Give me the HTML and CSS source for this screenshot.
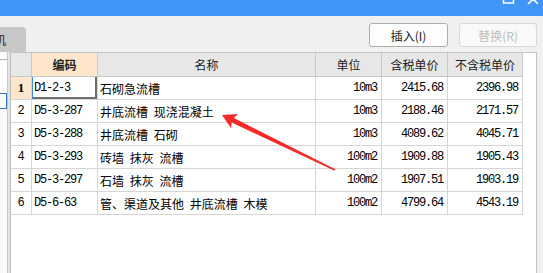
FILE: index.html
```html
<!DOCTYPE html>
<html>
<head>
    <meta charset="utf-8">
    <link rel="stylesheet" href="styles.css">
</head>
<body>
<div class="titlebar">
    <svg class="winbtns" width="40" height="16" viewBox="0 0 40 16">
        <rect x="5.5" y="-8" width="10" height="11" fill="none" stroke="#fff" stroke-width="1.5"/>
        <path d="M30 -6 L40 4 M40 -6 L30 4" stroke="#fff" stroke-width="1.6"/>
    </svg>
</div>
<div class="toolbar">
    <div class="tab"><span>机</span></div>
    <div class="actions">
        <button class="btn">插入(I)</button>
        <button class="btn disabled">替换(R)</button>
    </div>
</div>
<div class="main">
    <div class="sidepanel">
        <div class="box"></div>
        <div class="box focus"></div>
    </div>
    <div class="splitter"></div>
    <div class="grid">
        <table>
            <thead>
            <tr>
                <th class="c-no"></th>
                <th class="c-code current"><b>编码</b></th>
                <th class="c-name">名称</th>
                <th class="c-unit">单位</th>
                <th class="c-tax">含税单价</th>
                <th class="c-notax">不含税单价</th>
            </tr>
            </thead>
            <tbody>
            <tr>
                <td class="no current"><b>1</b></td>
                <td class="mono selected">D1-2-3</td>
                <td class="cn">石砌急流槽</td>
                <td class="mono right">10m3</td>
                <td class="mono right">2415.68</td>
                <td class="mono right">2396.98</td>
            </tr>
            <tr>
                <td class="no">2</td>
                <td class="mono">D5-3-287</td>
                <td class="cn">井底流槽 现浇混凝土</td>
                <td class="mono right">10m3</td>
                <td class="mono right">2188.46</td>
                <td class="mono right">2171.57</td>
            </tr>
            <tr>
                <td class="no">3</td>
                <td class="mono">D5-3-288</td>
                <td class="cn">井底流槽 石砌</td>
                <td class="mono right">10m3</td>
                <td class="mono right">4089.62</td>
                <td class="mono right">4045.71</td>
            </tr>
            <tr>
                <td class="no">4</td>
                <td class="mono">D5-3-293</td>
                <td class="cn">砖墙 抹灰 流槽</td>
                <td class="mono right">100m2</td>
                <td class="mono right">1909.88</td>
                <td class="mono right">1905.43</td>
            </tr>
            <tr>
                <td class="no">5</td>
                <td class="mono">D5-3-297</td>
                <td class="cn">石墙 抹灰 流槽</td>
                <td class="mono right">100m2</td>
                <td class="mono right">1907.51</td>
                <td class="mono right">1903.19</td>
            </tr>
            <tr>
                <td class="no">6</td>
                <td class="mono">D5-6-63</td>
                <td class="cn">管、渠道及其他 井底流槽 木模</td>
                <td class="mono right">100m2</td>
                <td class="mono right">4799.64</td>
                <td class="mono right">4543.19</td>
            </tr>
            </tbody>
        </table>
    </div>
    <div class="edge"></div>
</div>
<svg class="arrow" width="543" height="273" viewBox="0 0 543 273">
    <polygon fill="#f42b2b" points="222,115 238.1,113.9 233.9,118.1 335.3,169.3 334.6,170.7 231.7,122.5 231.1,128.3"/>
</svg>
</body>
</html>
```

FILE: styles.css
```css
html,body{margin:0;padding:0}
body{width:543px;height:273px;overflow:hidden;background:#f0f0f0;font-family:"Noto Sans CJK SC","Liberation Sans",sans-serif;font-size:12px;color:#000;position:relative}

.titlebar{height:16px;background:#3f96f6;display:flex;justify-content:flex-end;overflow:hidden}
.winbtns{margin-right:5px;display:block}

.toolbar{height:36px;display:flex;align-items:flex-end}
.tab{width:26px;height:25px;background:#c7c7c7;border-top-right-radius:4px;overflow:hidden;display:flex;align-items:center;color:#222}
.tab span{margin-left:-6px;margin-top:-1px}
.actions{margin-left:auto;margin-right:6px;align-self:flex-start;margin-top:7px;display:flex;gap:11px}
.btn{width:79px;height:24px;padding:0;background:#fdfdfd;border:1px solid #adadad;border-radius:3px;font-family:"Noto Sans CJK SC",sans-serif;font-size:12px;color:#222}
.btn.disabled{width:78px;border-color:#d9d9d9;color:#bdbdbd;background:#f9f9f9}

.main{height:221px;display:flex}
.sidepanel{width:7px;border-right:1px solid #c8c8c8;background:#fbfbfb;padding-top:7px;box-sizing:content-box}
.sidepanel .box{height:27px;border-top:1px solid #b4b4b4;background:#fff}
.sidepanel .box.focus{height:14px;margin-top:6px;border:1px solid #2f6fc4;border-left:none}
.splitter{width:2px;background:#e4e4e4}
.grid{width:525px;background:#fff;border-left:1px solid #bcbcbc;border-top:1px solid #c4c4c4;border-right:1px solid #c4c4c4}
.edge{flex:1;background:#f0f0f0}

table{border-collapse:separate;border-spacing:0;table-layout:fixed;width:512px}
th,td{box-sizing:border-box;padding:0;white-space:nowrap;overflow:hidden}
th{height:24px;background:#e7e7e7;border-right:1px solid #c9c9c9;border-bottom:1px solid #c9c9c9;font-weight:normal;color:#222;text-align:center}
th b{font-weight:bold}
td{height:23px;border-right:1px solid #d6d6d6;border-bottom:1px solid #d6d6d6;padding-left:2px}
th.current,td.current{background:#fde6ca}
.c-no{width:21px}
.c-code{width:66px}
.c-name{width:218px}
.c-unit{width:66px}
.c-tax{width:66px}
.c-notax{width:75px}

.mono{font-family:"Liberation Mono","DejaVu Sans Mono",monospace;letter-spacing:-1.2px}
.right{text-align:right;padding-left:0;padding-right:4px}
.no{text-align:center;padding-left:0;font-family:"Liberation Mono",monospace}
.no b{font-family:"Liberation Serif",serif;font-size:13px}
.cn{word-spacing:3px}
td.selected{box-shadow:inset 1px 0 #3a8ae8,inset -2px -2px #6f6f6f}

.arrow{position:absolute;left:0;top:0;pointer-events:none}
```
